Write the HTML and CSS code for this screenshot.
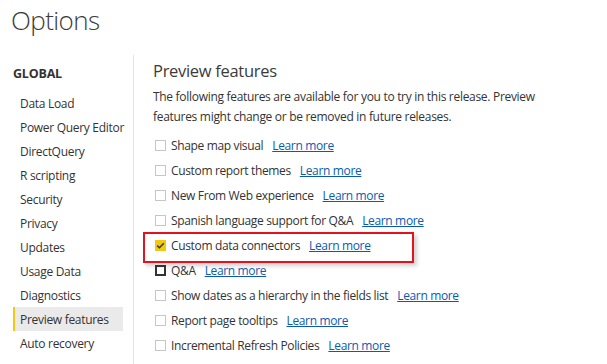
FILE: index.html
```html
<!DOCTYPE html>
<html>
<head>
<meta charset="utf-8">
<link rel="stylesheet" href="styles.css">
</head>
<body>
<div class="dialog">
  <h1 class="title">Options</h1>
  <div class="body">
    <nav class="nav">
      <div class="nav-group">GLOBAL</div>
      <ul class="nav-list">
        <li class="nav-item">Data Load</li>
        <li class="nav-item">Power Query Editor</li>
        <li class="nav-item">DirectQuery</li>
        <li class="nav-item">R scripting</li>
        <li class="nav-item">Security</li>
        <li class="nav-item">Privacy</li>
        <li class="nav-item">Updates</li>
        <li class="nav-item">Usage Data</li>
        <li class="nav-item">Diagnostics</li>
        <li class="nav-item active">Preview features</li>
        <li class="nav-item">Auto recovery</li>
      </ul>
    </nav>
    <main class="content">
      <h2 class="heading">Preview features</h2>
      <p class="desc">The following features are available for you to try in this release. Preview features might change or be removed in future releases.</p>
      <ul class="features">
        <li class="feature"><span class="box"></span><span class="label">Shape map visual</span><a class="link">Learn more</a></li>
        <li class="feature"><span class="box"></span><span class="label">Custom report themes</span><a class="link">Learn more</a></li>
        <li class="feature"><span class="box"></span><span class="label">New From Web experience</span><a class="link">Learn more</a></li>
        <li class="feature"><span class="box"></span><span class="label">Spanish language support for Q&amp;A</span><a class="link">Learn more</a></li>
        <li class="feature highlighted"><span class="box checked"><svg viewBox="0 0 11 11" width="11" height="11"><path d="M2.2 5.6 L4.4 7.8 L8.8 3.2" fill="none" stroke="#3a3a3a" stroke-width="1.5"/></svg></span><span class="label">Custom data connectors</span><a class="link">Learn more</a><span class="callout"></span></li>
        <li class="feature"><span class="box focused"></span><span class="label">Q&amp;A</span><a class="link">Learn more</a></li>
        <li class="feature"><span class="box"></span><span class="label">Show dates as a hierarchy in the fields list</span><a class="link">Learn more</a></li>
        <li class="feature"><span class="box"></span><span class="label">Report page tooltips</span><a class="link">Learn more</a></li>
        <li class="feature"><span class="box"></span><span class="label">Incremental Refresh Policies</span><a class="link">Learn more</a></li>
      </ul>
    </main>
  </div>
</div>
</body>
</html>
```
FILE: styles.css
```css
* { box-sizing: border-box; }
html, body { margin: 0; padding: 0; background: #fff; }
body {
  font-family: "Open Sans", "Noto Sans", sans-serif;
  color: #333;
  width: 607px;
  height: 364px;
  overflow: hidden;
}
.title {
  margin: 0;
  padding: 3px 0 0 11px;
  height: 55px;
  font-weight: 300;
  font-size: 26px;
  letter-spacing: -0.6px;
  line-height: 34px;
  color: #3b3b3b;
}
.body {
  display: flex;
}
.nav {
  width: 134px;
  border-right: 1px solid #e3e3e3;
  padding: 7px 0 0 13px;
  height: 320px;
}
.nav-group {
  font-weight: 700;
  font-size: 12.5px;
  letter-spacing: -0.2px;
  line-height: 24px;
  color: #333;
  margin-bottom: 5px;
}
.nav-list {
  list-style: none;
  margin: 0;
  padding: 0;
}
.nav-item {
  width: 110px;
  height: 24px;
  line-height: 25px;
  font-size: 12px;
  letter-spacing: -0.3px;
  padding-left: 5px;
  border-left: 2px solid transparent;
  color: #333;
  white-space: nowrap;
}
.nav-item.active {
  background: #eaeaea;
  border-left-color: #f2c811;
}
.content {
  padding: 4px 0 0 19px;
  flex: 1;
}
.heading {
  margin: 0;
  font-weight: 400;
  font-size: 16.5px;
  letter-spacing: -0.3px;
  line-height: 24px;
  color: #3b3b3b;
}
.desc {
  margin: 4px 0 0;
  width: 405px;
  font-size: 12px;
  letter-spacing: -0.3px;
  line-height: 20px;
  color: #333;
}
.features {
  list-style: none;
  margin: 6px 0 0;
  padding: 0;
}
.feature {
  position: relative;
  display: flex;
  align-items: center;
  height: 25px;
  font-size: 12px;
  letter-spacing: -0.35px;
  white-space: nowrap;
}
.box {
  width: 11px;
  height: 11px;
  border: 1px solid #c6c6c6;
  margin: 0 5px 0 2px;
  flex: none;
  display: flex;
}
.box.checked {
  border: none;
  background: #f2c811;
}
.box.focused {
  border: 2px solid #333;
}
.label { color: #333; }
.link {
  margin-left: 9px;
  color: #0c5ab0;
  text-decoration: underline;
}
.callout {
  position: absolute;
  left: -10px;
  top: -1px;
  width: 271px;
  height: 31px;
  border: 2px solid #e2131d;
  box-shadow: 3px 3px 4px rgba(0,0,0,0.18);
}
```
